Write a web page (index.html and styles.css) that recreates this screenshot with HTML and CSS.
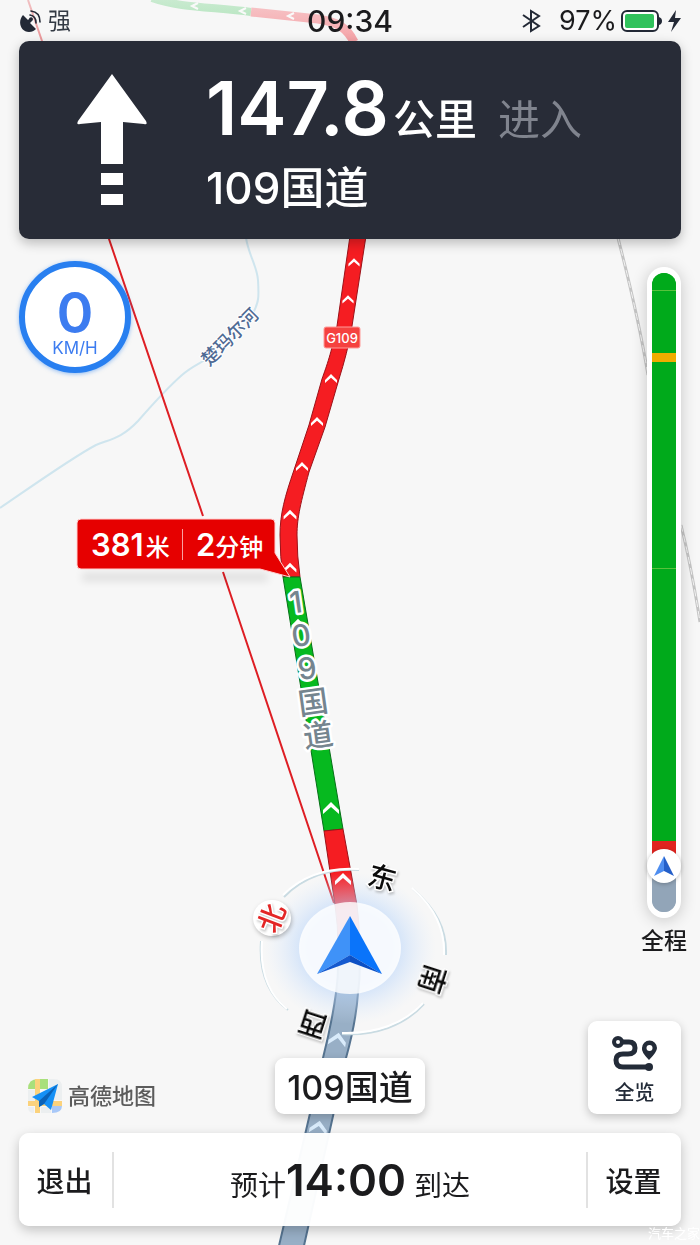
FILE: index.html
```html
<!doctype html>
<html lang="zh-CN">
<head>
  <meta charset="utf-8">
  <meta name="viewport" content="width=device-width, initial-scale=1">
  <title>高德地图</title>
  <link rel="stylesheet" href="styles.css">
</head>
<body>

  <!-- map canvas, sits under all the panels -->
  <svg class="map" viewBox="0 0 700 1245" preserveAspectRatio="xMidYMin slice">
    <defs>
      <radialGradient id="halo">
        <stop offset="0.5" stop-color="#b4d2fa" stop-opacity="0.65"/>
        <stop offset="1" stop-color="#d8e8fc" stop-opacity="0"/>
      </radialGradient>
      <linearGradient id="fade" x1="0" y1="0" x2="0" y2="1">
        <stop offset="0" stop-color="#f7f7f7" stop-opacity="0.75"/>
        <stop offset="1" stop-color="#f7f7f7" stop-opacity="0.55"/>
      </linearGradient>
      <filter id="soft" x="-10%" y="-100%" width="120%" height="300%"><feGaussianBlur stdDeviation="4"/></filter>
      <g id="chevron"><path d="M-8 4L0-4L8 4L8 8L0 1L-8 8Z"/></g>
    </defs>

    <!-- river -->
    <path class="river" d="M246 238C249 256 257 266 258 280C259 297 259 302 253 313M208 358C199 364 191 367 182 375C166 389 152 405 138 421C122 438 111 439 96 445C73 457 25 491 0 508"/>
    <text class="river-name" transform="translate(209 367) rotate(-45)">楚玛尔河</text>

    <!-- railway -->
    <path class="rail" d="M618 238Q638 315 648 375M681 525Q691 565 700 622"/>
    <path class="rail-dash" d="M618 238Q638 315 648 375M681 525Q691 565 700 622"/>

    <!-- line to destination -->
    <path class="bearing" d="M28 0L42 41L109 239L203 516M223 572L334 903"/>

    <!-- far part of the route -->
    <path class="far far-green" d="M152-2C180 8 215 7 251 12"/>
    <path class="far far-red" d="M251 12L318 19C338 22 347 28 354 42"/>
    <path class="far-arrows" d="M198 3L192 6L198 9M246 8L240 11L246 14M294 13L288 16L294 19"/>
    <rect width="700" height="42" fill="url(#fade)"/>

    <!-- route -->
    <path class="road red" d="M350 236L337 326C331 354 327 365 322 379L309 425L294 470C285 496 280 514 280 535Q280 557 283 577L300 577Q297 556 297 535C297 517 301 502 309 472L325 427L339 379C344 363 349 345 352 326L366 236Z"/>
    <path class="road green" d="M283 577L324 831L343 829L300 577Z"/>
    <path class="road red" d="M324 831L335 905Q338 925 338 948L359 948Q360 925 357 905L343 829Z"/>
    <path class="road passed" d="M338 948Q339 972 336 993Q332 1022 323 1058L278 1250L303 1250L346 1058Q356 1022 358 993Q361 972 359 948Z"/>

    <g fill="#fff">
      <use href="#chevron" transform="translate(354 261) scale(.7)"/>
      <use href="#chevron" transform="translate(348 298) scale(.7)"/>
      <use href="#chevron" transform="translate(331 377) scale(.75)"/>
      <use href="#chevron" transform="translate(317 420) scale(.75)"/>
      <use href="#chevron" transform="translate(302 465) scale(.75)"/>
      <use href="#chevron" transform="translate(290 513) scale(.8)"/>
      <use href="#chevron" transform="translate(290 566) scale(.8)"/>
      <use href="#chevron" transform="translate(298 622) scale(.8)"/>
      <use href="#chevron" transform="translate(331 806)"/>
      <use href="#chevron" transform="translate(343 877)"/>
    </g>
    <g fill="#d9ebfb">
      <use href="#chevron" transform="translate(338 1037) rotate(10) scale(1.1)"/>
      <use href="#chevron" transform="translate(319 1125) rotate(10) scale(1.1)"/>
    </g>

    <rect class="shield" x="324" y="327" width="36" height="21" rx="2"/>
    <text class="shield-text" x="342" y="343">G109</text>

    <g class="road-name">
      <text transform="translate(296 602) rotate(-8)" y="11">1</text>
      <text transform="translate(301 635) rotate(-8)" y="11">0</text>
      <text transform="translate(307 668) rotate(-8)" y="11">9</text>
      <text transform="translate(313 702) rotate(-8)" y="11">国</text>
      <text transform="translate(318 735) rotate(-8)" y="11">道</text>
    </g>

    <!-- jam callout -->
    <rect x="82" y="573" width="186" height="8" fill="#000" opacity=".1" filter="url(#soft)"/>
    <path class="callout" d="M81 519H271Q275 519 275 523V553L290 577L260 569H81Q77 569 77 565V523Q77 519 81 519Z"/>
    <g class="callout-text">
      <text x="91" y="556"><tspan class="num">381</tspan><tspan class="unit" dx="2">米</tspan></text>
      <path d="M182.500 529V560"/>
      <text x="196" y="556"><tspan class="num">2</tspan><tspan class="unit">分钟</tspan></text>
    </g>

    <!-- compass -->
    <ellipse cx="350" cy="948" rx="86" ry="76" fill="url(#halo)"/>
    <path class="ring-shade" d="M284 897C303 877 330 868 359 870M413 889C436 909 447 929 446 955M424 1004C404 1026 375 1036 342 1034M288 1010C266 993 259 968 261 941"/>
    <path class="ring" d="M283 895C303 875 330 867 359 869M412 888C435 908 445 929 444 955M423 1003C404 1024 375 1034 342 1033M287 1009C266 992 260 968 262 941"/>
    <ellipse cx="350" cy="948" rx="51" ry="46" fill="#fff" fill-opacity=".82"/>
    <path d="M350 916L317 974L350 955Z" fill="#3f92f8"/>
    <path d="M350 916L382 974L350 955Z" fill="#0a74fa"/>
    <path d="M317 974L350 955V962Z" fill="#1459cf"/>
    <path d="M382 974L350 955V962Z" fill="#0b4fc4"/>
    <ellipse class="north-disc" cx="272" cy="918" rx="19" ry="18"/>
    <g class="compass-text">
      <text class="north" transform="translate(272 918) rotate(-69)" y="10">北</text>
      <text transform="translate(382 878) rotate(15)" y="10">东</text>
      <text transform="translate(432 979) rotate(108)" y="10">南</text>
      <text transform="translate(313 1024) rotate(198)" y="10">西</text>
    </g>
  </svg>

  <div class="app">
    <header class="status">
      <div class="status-left">
        <svg width="24" height="24" viewBox="0 0 24 24">
          <path d="M4 6C-2 13 2 23 10 23C13 23 15 22 17 20L11 14L13 12A2 2 0 1 0 10 10L9 11Z" fill="#232936"/>
          <path d="M11 6Q17 7 17 14M12 2Q21 3 21 13" fill="none" stroke="#232936" stroke-width="1.600" stroke-linecap="round"/>
        </svg>
        <span>强</span>
      </div>
      <time class="clock">09:34</time>
      <div class="status-right">
        <svg class="bluetooth" width="20" height="24" viewBox="0 0 20 24">
          <path d="M2 6L18 17L10 22V2L18 7L2 18" fill="none" stroke="#232936" stroke-width="2"/>
        </svg>
        <span>97%</span>
        <svg width="60" height="24" viewBox="0 0 60 24">
          <rect x="1" y="2" width="36" height="20" rx="5" fill="#fff" stroke="#232936" stroke-width="2"/>
          <rect x="4" y="5" width="29" height="14" rx="2" fill="#30c25c"/>
          <path d="M38 8Q41 9 41 12Q41 15 38 16Z" fill="#232936"/>
          <path d="M55 1L47 13H53L50 23L60 9H54Z" fill="#232936"/>
        </svg>
      </div>
    </header>

    <section class="turn">
      <svg class="turn-arrow" width="72" height="134" viewBox="0 0 72 134">
        <path d="M36 1L70 48Q72 52 68 51L47 49V91H25V49L4 51Q0 52 2 48ZM25 100H47V112H25ZM25 121H47V132H25Z" fill="#fff"/>
      </svg>
      <div class="turn-text">
        <p class="distance"><b>147.8</b><span class="km">公里</span><span class="enter">进入</span></p>
        <p class="next-road">109国道</p>
      </div>
    </section>

    <main class="stage">
      <div class="speed">
        <strong>0</strong>
        <span>KM/H</span>
      </div>
      <aside class="trip">
        <div class="track">
          <div class="bar">
            <i class="seg clear" style="flex-grow:17"></i>
            <i class="tick"></i>
            <i class="seg clear" style="flex-grow:62"></i>
            <i class="seg slow" style="flex-grow:9"></i>
            <i class="seg clear" style="flex-grow:206"></i>
            <i class="tick"></i>
            <i class="seg clear" style="flex-grow:273"></i>
            <i class="seg jam" style="flex-grow:25"></i>
            <div class="car">
              <svg width="22" height="22" viewBox="0 0 22 22">
                <path d="M11 1L1 21L11 16Z" fill="#4d8df0"/>
                <path d="M11 1L21 21L11 16Z" fill="#245fc9"/>
              </svg>
            </div>
            <i class="seg done" style="flex-grow:46"></i>
          </div>
        </div>
        <span class="trip-label">全程</span>
      </aside>
    </main>

    <div class="tools">
      <div class="brand">
        <svg width="36" height="36" viewBox="0 0 36 36">
          <path d="M1 11Q1 1 11 1H21V11H1Z" fill="#a9e07c"/>
          <path d="M22 1H27Q35 1 35 9V22H22ZM1 12H8V23H1Z" fill="#eceff0"/>
          <path d="M8 1H13V35H8ZM1 23H35V28H1Z" fill="#fbd27c"/>
          <path d="M1 29H7V35Q1 35 1 29ZM14 29H24V35H14Z" fill="#eceff0"/>
          <path d="M25 28H35Q35 35 25 35Z" fill="#a8c8f8"/>
          <path d="M31 6L5 19L12 23V29L17 26L24 32Z" fill="#1590f6"/>
          <path d="M31 6L12 23V29L17 26Z" fill="#0a62b8"/>
        </svg>
        <span>高德地图</span>
      </div>
      <div class="current-road">109国道</div>
      <button class="overview" type="button">
        <svg width="48" height="40" viewBox="0 0 48 40">
          <g fill="none" stroke="#232b38" stroke-width="5">
            <circle cx="7" cy="8" r="4" stroke-width="4"/>
            <path d="M11 8H18Q24 8 24 14Q24 20 17 20H12Q5 20 5 26Q5 33 12 33H37"/>
          </g>
          <circle cx="38" cy="33" r="4" fill="#232b38"/>
          <path d="M38 26Q30 18 31 14A7.500 7.500 0 0 1 46 14Q46 18 38 26Z" fill="#232b38"/>
          <circle cx="38.500" cy="14" r="3" fill="#fff"/>
        </svg>
        <span>全览</span>
      </button>
    </div>

    <footer class="bottom">
      <button type="button">退出</button>
      <p class="eta">预计<b>14:00</b><span>到达</span></p>
      <button type="button">设置</button>
    </footer>
  </div>

  <span class="watermark">汽车之家</span>

</body>
</html>
```
FILE: styles.css
```css
* {
    box-sizing:border-box;
}
body {
    margin:0;
    background:#f7f7f7;
    color:#1b1b1d;
    font-family:Inter, "Noto Sans CJK SC", sans-serif;
    position:relative;
    overflow-x:hidden;
}
p {
    margin:0;
}
button {
    border:0;
    padding:0;
    background:none;
    color:inherit;
    font:inherit;
}
svg {
    display:block;
    flex:none;
}

/* map */
.map {
    position:absolute;
    top:0;
    left:0;
    width:100%;
    height:100%;
}
.river {
    fill:none;
    stroke:#cfe5ee;
    stroke-width:2;
}
.river-name {
    fill:#4f6a94;
    stroke:#fff;
    stroke-width:2;
    paint-order:stroke;
    font-size:18px;
    font-weight:500;
}
.rail {
    fill:none;
    stroke:#c4c4c4;
    stroke-width:3;
}
.rail-dash {
    fill:none;
    stroke:#f4f4f4;
    stroke-width:1;
    stroke-dasharray:7 4;
}
.bearing {
    fill:none;
    stroke:#de1e24;
    stroke-width:2;
}
.far {
    fill:none;
    stroke-width:8;
}
.far-green { stroke:#3fc45a; }
.far-red { stroke:#f43a44; stroke-width:9; }
.far-arrows {
    fill:none;
    stroke:#fff;
    stroke-width:2;
}
.road { stroke-width:1; }
.red { fill:#f51d22; stroke:#9c1219; }
.green { fill:#06b91f; stroke:#067018; }
.passed { fill:#98afc6; stroke:#557390; stroke-width:2; }
.shield {
    fill:#f5423f;
    stroke:#ff9c9a;
    stroke-width:1;
}
.shield-text {
    fill:#fff;
    font-size:13px;
    font-weight:500;
    text-anchor:middle;
}
.road-name {
    fill:#75858f;
    stroke:#fff;
    stroke-width:5;
    stroke-linejoin:round;
    paint-order:stroke;
    font-size:30px;
    font-weight:500;
    text-anchor:middle;
}
.callout {
    fill:#e60000;
    stroke:#ffd0d0;
    stroke-width:1;
}
.callout-text {
    fill:#fff;
    stroke:none;
    font-weight:500;
}
.callout-text path {
    stroke:#f9a0a0;
    stroke-width:1;
}
.num {
    font-size:31px;
    font-weight:600;
}
.unit { font-size:24px; }
.ring, .ring-shade {
    fill:none;
    stroke:#fff;
    stroke-width:2;
}
.ring-shade { stroke:#c9dbe2; }
.north-disc {
    fill:#fff;
    filter:drop-shadow(1px 2px 2px rgba(0,0,0,.25));
}
.compass-text {
    fill:#0c0c0c;
    stroke:#fff;
    stroke-width:3;
    paint-order:stroke;
    font-size:28px;
    font-weight:500;
    text-anchor:middle;
    filter:drop-shadow(1px 2px 1px rgba(0,0,0,.2));
}
.compass-text .north { fill:#e32626; }

/* panels */
.app {
    position:relative;
    display:flex;
    flex-direction:column;
    min-height:100vh;
    padding:0 19px 19px;
}
.status {
    display:grid;
    grid-template-columns:1fr auto 1fr;
    align-items:center;
    height:41px;
    font-size:24px;
}
.status-left, .status-right {
    display:flex;
    align-items:center;
}
.status-left {
    gap:5px;
    color:#333a44;
    font-size:23px;
}
.status-left span { padding-bottom:4px; }
.status-right {
    justify-content:flex-end;
    gap:4px;
    font-size:27px;
}
.bluetooth { margin-right:14px; }
.clock {
    font-size:30px;
    font-weight:500;
}
.turn {
    display:flex;
    align-items:center;
    gap:58px;
    height:198px;
    padding-left:57px;
    border-radius:10px;
    background:#282c37;
    color:#fff;
    box-shadow:0 4px 12px rgba(0,0,0,.25);
}
.turn-text {
    padding-top:8px;
}
.distance {
    display:flex;
    align-items:baseline;
    height:88px;
    line-height:88px;
}
.distance b {
    font-size:74px;
    font-weight:600;
}
.distance span {
    font-size:42px;
}
.km {
    margin-left:4px;
    font-weight:500;
}
.enter {
    margin-left:21px;
    color:#80848e;
}
.next-road {
    font-size:44px;
    font-weight:500;
    line-height:72px;
}
.stage {
    flex:1;
    display:flex;
    justify-content:space-between;
    padding-top:22px;
}
.speed {
    display:flex;
    flex-direction:column;
    align-items:center;
    width:112px;
    height:112px;
    padding-top:14px;
    border:6px solid #287ff0;
    border-radius:50%;
    background:#fff;
    color:#3c7cf0;
    box-shadow:0 1px 4px rgba(40,127,240,.5);
}
.speed strong {
    font-size:56px;
    font-weight:600;
    line-height:64px;
    height:57px;
}
.speed span {
    font-size:17px;
    line-height:20px;
}
.trip {
    display:flex;
    flex-direction:column;
    align-items:flex-end;
    padding-top:6px;
    margin-right:-6px;
}
.track {
    flex:1;
    display:flex;
    width:34px;
    margin-right:6px;
    padding:6px 5px;
    border-radius:17px;
    background:#fff;
    box-shadow:0 2px 16px rgba(0,0,0,.2);
}
.bar {
    flex:1;
    display:flex;
    flex-direction:column;
    border-radius:12px;
    background:linear-gradient(#00aa1b 50%, #92a5b8 50%);
}
.seg {
    flex-basis:0;
}
.seg:first-child { border-radius:12px 12px 0 0; }
.seg:last-child { border-radius:0 0 12px 12px; }
.clear { background:#00aa1b; }
.slow { background:#f0ac00; }
.jam { background:#e0231f; }
.done { background:#92a5b8; }
.tick {
    height:1px;
    background:#58c23c;
}
.car {
    z-index:1;
    display:flex;
    align-items:center;
    justify-content:center;
    width:34px;
    height:34px;
    margin:-17px -5px;
    border-radius:50%;
    background:#fff;
    box-shadow:0 1px 4px rgba(0,0,0,.25);
}
.trip-label {
    margin-top:8px;
    font-size:23px;
    font-weight:500;
    line-height:30px;
}
.tools {
    display:grid;
    grid-template-columns:1fr auto 1fr;
    align-items:end;
    margin:65px 0 19px;
}
.brand {
    display:flex;
    align-items:center;
    gap:5px;
    padding-left:8px;
    color:#5c5c5c;
    font-size:22px;
    font-weight:500;
    line-height:36px;
}
.current-road {
    width:150px;
    height:56px;
    border-radius:9px;
    background:#fff;
    font-size:34px;
    font-weight:500;
    line-height:60px;
    text-align:center;
    box-shadow:0 3px 10px rgba(0,0,0,.22);
}
.overview {
    justify-self:end;
    display:flex;
    flex-direction:column;
    align-items:center;
    width:93px;
    height:93px;
    padding-top:13px;
    border-radius:9px;
    background:#fff;
    color:#232b38;
    font-size:20px;
    font-weight:500;
    line-height:38px;
    box-shadow:0 3px 10px rgba(0,0,0,.22);
}
.bottom {
    display:flex;
    align-items:center;
    height:93px;
    border-radius:10px;
    background:rgba(255,255,255,.97);
    box-shadow:0 4px 12px rgba(0,0,0,.22);
}
.bottom button {
    width:95px;
    height:56px;
    padding-right:2px;
    font-size:28px;
    font-weight:500;
}
.bottom button:first-child { border-right:2px solid #e2e2e2; }
.bottom button:last-child { border-left:2px solid #e2e2e2; }
.eta {
    flex:1;
    padding-top:6px;
    font-size:28px;
    line-height:56px;
    text-align:center;
}
.eta b {
    font-size:44px;
    font-weight:600;
}
.eta span { margin-left:8px; }
.watermark {
    position:absolute;
    right:0;
    bottom:0;
    color:#fff;
    font-size:13px;
    line-height:24px;
}
```
